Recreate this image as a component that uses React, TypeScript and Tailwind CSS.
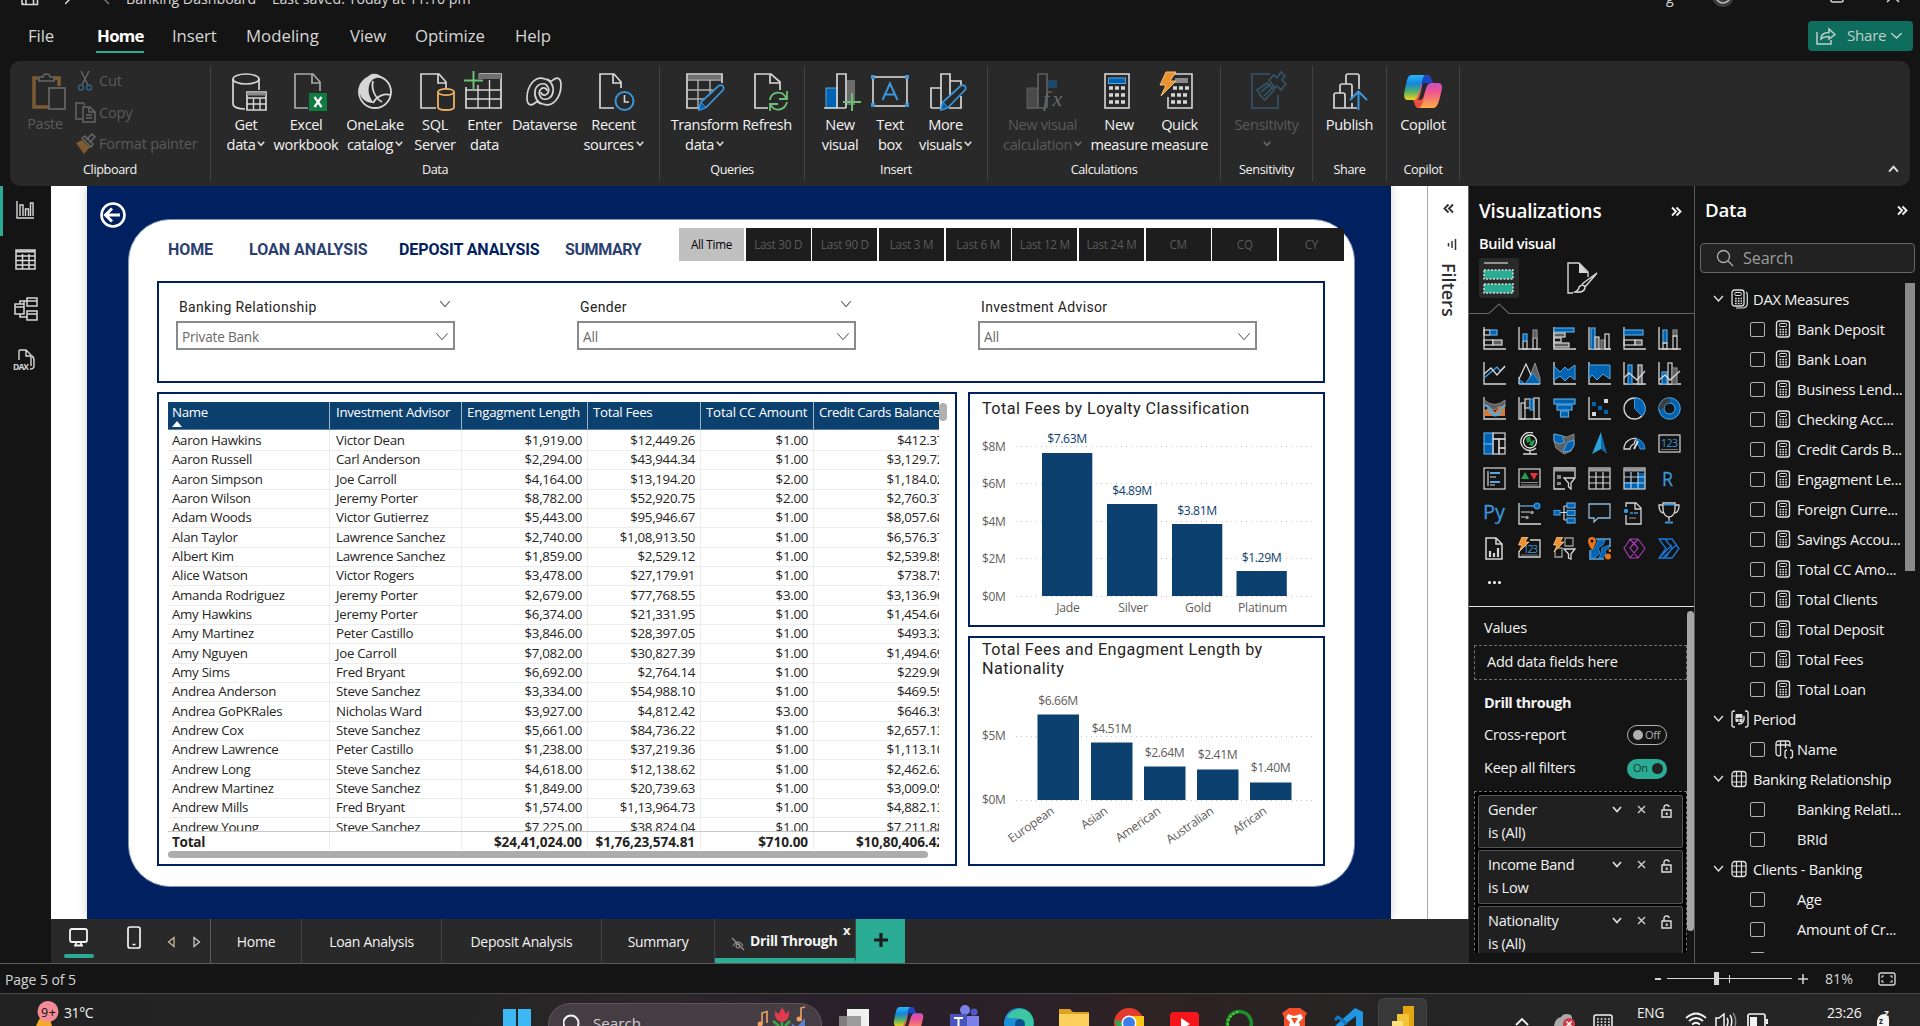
import React from "react";

type SvgProps = { children: React.ReactNode; w?: number; h?: number; vb?: string; className?: string };
const Svg = ({ children, w = 23, h = 23, vb, className }: SvgProps) => (
  <svg width={w} height={h} viewBox={vb ?? `0 0 ${w} ${h}`} fill="none" className={"shrink-0 " + (className ?? "")}>
    {children}
  </svg>
);

const W = "#d6d6d6";
const B = "#0063b1";
const L = "#3a96dd";
const D = "#5f5f5f";

/* ---------- ribbon icons: 40 x 40 boxes ---------- */
const I = ({ children, className }: { children: React.ReactNode; className?: string }) => <Svg w={40} h={40} className={className}>{children}</Svg>;

const icons: Record<string, React.ReactNode> = {
  getdata: (
    <I className="ml-[4px]">
      <ellipse cx="18" cy="8" rx="13" ry="5" stroke={W} strokeWidth="1.7" />
      <path d="M5 8V33C5 36 10 38 17 38M31 8V19" stroke={W} strokeWidth="1.7" />
      <path d="M19 21H38V39H19Z" stroke={W} strokeWidth="1.7" />
      <path d="M19 23H38" stroke="#8a8a8a" strokeWidth="3" />
      <path d="M19 27H38M19 33H38M25.500 27V39M32 27V39" stroke={W} strokeWidth="1.4" />
    </I>
  ),
  excel: (
    <I className="ml-[4px]">
      <path d="M32 20V11L25 3H7V37H20M24 3V12H32" stroke="#a8a8a8" strokeWidth="1.7" />
      <rect x="21" y="22" width="18" height="18" fill="#107c41" />
      <path d="M26.500 26L33.500 36M33.500 26L26.500 36" stroke="#fff" strokeWidth="2.200" />
    </I>
  ),
  onelake: (
    <I>
      <circle cx="20" cy="21" r="16" stroke={W} strokeWidth="1.800" />
      <path d="M12 8C14 1 24 1 28 8C22 5 17 8 15 12C12 18 14 27 19 32C8 32 3 24 4.500 16C6 12 9 9 12 8Z" fill={W} />
      <path d="M18 10C16 18 20 27 27 31M18 32C22 25 29 22 36 24" stroke={W} strokeWidth="1.800" />
    </I>
  ),
  sql: (
    <I className="ml-[6px]">
      <path d="M28 17V11L21 3H3V37H18M20 3V12H28" stroke={W} strokeWidth="1.700" />
      <ellipse cx="28" cy="21" rx="8" ry="3.200" stroke="#eeb15f" strokeWidth="1.800" />
      <path d="M20 21V36C20 40 36 40 36 36V21" stroke="#eeb15f" strokeWidth="1.800" />
    </I>
  ),
  enter: (
    <I className="-ml-[2px]">
      <path d="M2 16V37H37V3H15" stroke={W} strokeWidth="1.700" />
      <rect x="14" y="3" width="23" height="5" fill="#707070" />
      <path d="M2 19H37M2 28H37M14 14V37M25.500 9V37" stroke={W} strokeWidth="1.400" />
      <path d="M9.500 0V19M0 9.500H19" stroke="#6cc077" strokeWidth="2" />
    </I>
  ),
  dataverse: (
    <I className="-ml-[2px]">
      <g stroke={W} strokeWidth="1.700">
        <path d="M21 8C26 9 30 14 29 21C28 27 23 29 19 28C15 26 14 21 17 18C19 16 23 17 23 20" />
        <path d="M21 8C11 4 3 15 3 27C3 33 6 36 11 32C13 30 14 31 17 33" />
        <path d="M19 33C14 32 10 27 11 20C12 14 17 12 21 13C25 15 26 20 23 23C21 25 17 24 17 21" />
        <path d="M19 33C29 37 37 26 37 14C37 8 34 5 29 9C27 11 26 10 23 8" />
      </g>
    </I>
  ),
  recent: (
    <I className="ml-[5px]">
      <path d="M25 17V11L18 3H4V37H18M17 3V12H25" stroke={W} strokeWidth="1.7" />
      <circle cx="28.500" cy="30" r="9" stroke={L} strokeWidth="2" />
      <path d="M28.500 24V31H33" stroke={W} strokeWidth="1.600" />
    </I>
  ),
  transform: (
    <I>
      <path d="M37 12V3H2V37H14" stroke={W} strokeWidth="1.700" />
      <rect x="3" y="4" width="33" height="4" fill="#707070" />
      <path d="M2 9H37M2 19H28M2 28H19M13 9V37M25 9V22" stroke="#b0b0b0" strokeWidth="1.400" />
      <path d="M14 39L16 31L34 14.500C37 13 40 16 38 19L21 36.500Z" stroke={L} strokeWidth="1.700" fill="#292929" />
      <path d="M14 39L16 31L21 36.500Z" fill={B} stroke={L} />
    </I>
  ),
  refresh: (
    <I className="ml-[5px]">
      <path d="M30 19V11L21 3H5V37H18M20 3V12H30" stroke={W} strokeWidth="1.700" />
      <path d="M20 29C21 20 33 19 36 27M37 20V28H29M37 31C35 40 24 41 21 34M20 40V33H28" stroke="#6cc077" strokeWidth="1.800" />
    </I>
  ),
  newvisual: (
    <I className="ml-[3px]">
      <rect x="4" y="17" width="11" height="20" fill={B} stroke="#5aa7e0" />
      <path d="M15 37V3H24V37M2 37H24" stroke={W} strokeWidth="1.700" />
      <rect x="25" y="9" width="8" height="25" fill="#6b6b6b" />
      <path d="M30 22V40M21 31H39" stroke="#6cc077" strokeWidth="2" />
    </I>
  ),
  textbox: (
    <I>
      <rect x="3" y="6" width="34" height="29" stroke={W} strokeWidth="1.600" />
      <path d="M1 4H5V8H1ZM35 4H39V8H35ZM1 32H5V36H1ZM35 32H39V36H35Z" fill={L} />
      <path d="M12.500 29L20 12.500L27.500 29M15 23.500H25" stroke={L} strokeWidth="2" />
    </I>
  ),
  more: (
    <I className="ml-[3px]">
      <path d="M4 37V17H14V3H23V27M4 37H14M14 17V37M23 10H34V14M34 25V37H22" stroke={W} strokeWidth="1.700" />
      <path d="M14 39L16 31L34 14.500C37 13 40 16 38 19L21 36.500Z" stroke={L} strokeWidth="1.700" fill="#292929" />
      <path d="M14 39L16 31L21 36.500Z" fill={B} stroke={L} />
    </I>
  ),
  calc: (
    <I className="ml-[2px]">
      <rect x="3" y="17" width="11" height="20" fill="#4a4a4a" stroke="#5f5f5f" />
      <path d="M14 37V3H23V37M3 37H20" stroke="#5f5f5f" strokeWidth="1.700" />
      <rect x="24" y="9" width="9" height="8" fill="#1d486c" />
      <text x="19" y="35" fill="#686868" fontSize="22" fontStyle="italic" fontFamily="Liberation Serif" textLength="19">fx</text>
    </I>
  ),
  newmeasure: (
    <I className="-ml-[4px]">
      <rect x="8" y="3" width="24" height="34" stroke={W} strokeWidth="1.600" />
      <rect x="11.500" y="7" width="17" height="5.500" fill={B} stroke="#5aa7e0" />
      <path d="M12 17H28M12 24H28M12 31H28" stroke={W} strokeWidth="3.600" strokeDasharray="4 2" />
    </I>
  ),
  quick: (
    <I className="-ml-[8px]">
      <path d="M12 26V37H36V3H16" stroke={W} strokeWidth="1.600" />
      <rect x="19" y="7" width="13" height="5" fill="#8a8a8a" />
      <path d="M17 17H33M15 24H33M15 31H33" stroke={W} strokeWidth="3.600" strokeDasharray="4 2" />
      <path d="M10 1H20L14 10H20L5 25L10 14H4Z" fill="#e8912d" stroke="#f7c27d" />
    </I>
  ),
  sensitivity: (
    <I className="ml-[3px]">
      <path d="M22 3H4V37H30V24" stroke="#335467" strokeWidth="1.700" />
      <path d="M19 12L26 19L17 29L12 24L9 19ZM13 21L22 13M16 25L25 16M21 9L26 4L29 7L33 1L37 5L34 9L38 13L33 19L29 15L27 17Z" stroke="#335467" strokeWidth="1.700" />
    </I>
  ),
  publish: (
    <I className="ml-[2px]">
      <path d="M3 37V24Q3 22 5 22H12Q14 22 14 24V37M9 22V15Q9 13 11 13H19Q21 13 21 15V28M15 13V5Q15 3 17 3H26Q28 3 28 5V18M2 37H26M21 32V37" stroke={W} strokeWidth="1.700" />
      <path d="M27.500 39V21M19 29L27.500 20.500L36 29" stroke={L} strokeWidth="2" />
    </I>
  ),
  copilot: <CopilotLogo size={40} id="rb" />,
};

function CopilotLogo({ size, id }: { size: number; id: string }) {
  return (
    <svg width={size} height={size} viewBox="0 0 40 40" className="shrink-0">
      <defs>
        <linearGradient id={id + "a"} x1="0" y1="0" x2="0" y2="1">
          <stop offset="0" stopColor="#2bb5f5" />
          <stop offset=".35" stopColor="#1487dc" />
          <stop offset=".65" stopColor="#4fae6a" />
          <stop offset="1" stopColor="#f3d01c" />
        </linearGradient>
        <linearGradient id={id + "b"} x1="0" y1="0" x2="0" y2="1">
          <stop offset="0" stopColor="#a04df0" />
          <stop offset=".5" stopColor="#ee5591" />
          <stop offset="1" stopColor="#fdb045" />
        </linearGradient>
      </defs>
      <path d="M17 4H24C28 4 28 10 30 12H36C39 13 40 15 38 22C36 30 35 37 30 37H16C12 37 12 32 11 29Z" fill={`url(#${id}b)`} />
      <path d="M18 4H24C28 4 28 10 30 12C25 12 24 14 22 20L18 11Z" fill="#1747c6" />
      <path d="M9 4H22C19 6 18 16 16 22C14 27 14 29 10 29H4C0 28 1 22 2 18C4 10 4 4 9 4Z" fill={`url(#${id}a)`} />
      <path d="M10 29C14 29 14 27 16 22L22 20C21 26 20 36 16 37C12 37 12 32 10 29Z" fill="#e9503f" />
      <path d="M20 12H27C24 12 23 18 21 24C20 28 19 29 15 29C18 25 18 16 20 12Z" fill="#292929" />
    </svg>
  );
}

const Chev = ({ s = 8, c = "#cfcfcf", up, sw = 1.600, w }: { s?: number; c?: string; up?: boolean; sw?: number; w?: number }) => (
  <svg width={w ?? s} height={s * 0.7} viewBox="0 0 10 7" preserveAspectRatio="none" fill="none" className="inline-block shrink-0">
    <path d={up ? "M1 6L5 1.500L9 6" : "M1 1L5 5.500L9 1"} stroke={c} strokeWidth={sw} />
  </svg>
);

type BtnProps = { icon: string; a: string; b?: string; w: string; chev?: boolean; dim?: boolean };
const Btn = ({ icon, a, b, w, chev, dim }: BtnProps) => (
  <div className={`flex shrink-0 flex-col items-center pt-[10px] text-[14.600px] leading-5 whitespace-nowrap tracking-[-0.38px] ${w} ${dim ? "text-[#5a5a5a]" : "text-[#f3f3f3]"}`}>
    {icons[icon]}
    <span className="mt-[3px]">{a}</span>
    <span className="flex h-5 items-center gap-[2px]">
      {b}
      {chev && <Chev s={8} c={dim ? "#6a6a6a" : "#d8d8d8"} sw={2} />}
    </span>
  </div>
);

const Group = ({ label, w, pl, children }: { label: string; w: string; pl: string; children: React.ReactNode }) => (
  <div className={`my-[5px] flex shrink-0 flex-col border-r border-[#434343] ${w}`}>
    <div className={`-mt-[5px] flex h-[99px] ${pl}`}>{children}</div>
    <div className="flex h-[19px] items-center justify-center text-[12.700px] tracking-[-0.4px] text-[#f3f3f3]">{label}</div>
  </div>
);

function Header() {
  return (
    <header className="h-[61px] shrink-0">
      <div className="flex h-[12px] items-end overflow-hidden text-[#d8d8d8]">
        <Svg w={20} h={12} className="ml-[20px]"><path d="M2 -6V10H4M2 10.500H17.500V-6M6 10V4H13.500V10" stroke={W} strokeWidth="1.600" transform="translate(0,-6)" /></Svg>
        <Svg w={12} h={12} className="ml-[25px]"><path d="M0 4L8 -4" stroke={W} strokeWidth="1.500" /></Svg>
        <Svg w={12} h={12} className="ml-[24px]"><path d="M8 4L2 -2" stroke="#777" strokeWidth="1.500" /></Svg>
        <span className="mb-[3px] ml-[13px] w-[146px] text-[14.200px] leading-[20px] whitespace-nowrap">Banking Dashboard</span>
        <span className="mb-[3px] w-[199px] text-[14.200px] leading-[20px] whitespace-nowrap">Last saved: Today at 11:10 pm</span>
        <span className="mb-[4px] ml-[1195px] w-[8px] text-[14.200px] leading-[20px]">g</span>
        <Svg w={24} h={12} className="ml-[37px]"><circle cx="12" cy="-4" r="11" fill="#3c3c3c" /><circle cx="12" cy="-4" r="7" stroke="#bdbdbd" strokeWidth="1.600" /></Svg>
        <Svg w={16} h={12} className="ml-[95px]"><path d="M1 -4V1Q1 2 3 2H11Q13 2 13 1V-4" stroke={W} strokeWidth="1.500" /></Svg>
        <Svg w={16} h={12} className="ml-[40px]"><path d="M1 2L7 -4L13 2" stroke={W} strokeWidth="1.500" /></Svg>
      </div>
      <nav className="flex h-[49px] items-start text-[16.800px] leading-[47px] tracking-[-0.1px] text-[#d6d6d6]">
        <span className="ml-[28px] w-[69px]">File</span>
        <span className="relative mr-[29px] w-[46px] font-bold tracking-[-0.7px] text-white">
          Home
          <i className="absolute -left-px bottom-[6px] h-[2px] w-[48px] bg-[#2aac94]" />
        </span>
        <span className="w-[74px]">Insert</span>
        <span className="w-[104px] tracking-[0px]">Modeling</span>
        <span className="w-[65px]">View</span>
        <span className="w-[100px]">Optimize</span>
        <span>Help</span>
        <button className="mt-[9px] mr-[7px] ml-auto flex h-[30px] w-[105px] items-center rounded-[4px] bg-[#0e6d5c] pl-[8px] text-[15.200px] leading-none text-[#bcd0cb]">
          <Svg w={20} h={20} className="mr-[11px]">
            <path d="M1 6V18H15V14M5 13C5 8 9 6.500 13 6.500V3L19 8.500L13 13V10.500C9 10.500 7 11 5 13Z" stroke="#bcd0cb" strokeWidth="1.500" />
          </Svg>
          <span className="tracking-[-0.3px]">Share</span>
          <span className="ml-[4px] flex"><Chev s={11} w={13} c="#bcd0cb" sw={1.200} /></span>
        </button>
      </nav>
    </header>
  );
}

function Ribbon() {
  return (
    <div className="mx-[10px] flex h-[125px] shrink-0 rounded-[10px] bg-[#292929] relative z-10">
      <Group label="Clipboard" w="w-[201px]" pl="pl-[16px]">
        <div className="flex w-[38px] flex-col items-center pt-[10px] text-[14.400px] leading-5 tracking-[-0.2px] text-[#5a5a5a]">
          <Svg w={38} h={40} className="ml-[5px]">
            <path d="M9 7H5V36H20M25 7H30V15" stroke="#7d5b33" strokeWidth="3.500" />
            <path d="M10 10V6H14C14 2 21 2 21 6H25V10Z" stroke="#666" strokeWidth="1.700" />
            <rect x="20" y="17" width="16" height="21" stroke="#666" strokeWidth="1.700" fill="#292929" />
          </Svg>
          <span className="mt-[3px]">Paste</span>
        </div>
        <div className="ml-[11px] flex flex-col text-[14.600px] tracking-[-0.25px] text-[#5a5a5a]">
          <div className="mt-[4px] flex h-[33px] items-center"><Svg w={24} h={22}>
            <path d="M6 1L13 15M14 1L7 15" stroke="#666" strokeWidth="1.500" /><circle cx="6" cy="17.500" r="2.500" stroke="#335f80" strokeWidth="1.500" /><circle cx="14" cy="17.500" r="2.500" stroke="#335f80" strokeWidth="1.500" />
          </Svg>Cut</div>
          <div className="flex h-[33px] items-center"><Svg w={24} h={22}>
            <path d="M7 17H1V1H8L10 3M8 5H15L20 10V20H8ZM14 5V10H20M11 13H17M11 16H17" stroke="#666" strokeWidth="1.500" />
          </Svg>Copy</div>
          <div className="flex h-[33px] items-center whitespace-nowrap"><Svg w={24} h={22}>
            <path d="M11 7L17 1L20 4L14 10M7 5L16 14L18 11L10 3Z" stroke="#666" strokeWidth="1.500" /><path d="M1 10L7 7L15 14L9 21Z" fill="#7d5b33" />
          </Svg>Format painter</div>
        </div>
      </Group>
      <Group label="Data" w="w-[449px]" pl="pl-[7px]">
        <Btn icon="getdata" a="Get" b="data" chev w="w-[56px]" />
        <Btn icon="excel" a="Excel" b="workbook" w="w-[64px]" />
        <Btn icon="onelake" a="OneLake" b="catalog" chev w="w-[74px]" />
        <Btn icon="sql" a="SQL" b="Server" w="w-[46px]" />
        <Btn icon="enter" a="Enter" b="data" w="w-[53px]" />
        <Btn icon="dataverse" a="Dataverse" w="w-[67px]" />
        <Btn icon="recent" a="Recent" b="sources" chev w="w-[71px]" />
      </Group>
      <Group label="Queries" w="w-[145px]" pl="pl-[12px]">
        <Btn icon="transform" a="Transform" b="data" chev w="w-[65px]" />
        <Btn icon="refresh" a="Refresh" w="w-[60px]" />
      </Group>
      <Group label="Insert" w="w-[183px]" pl="pl-[12px]">
        <Btn icon="newvisual" a="New" b="visual" w="w-[46px]" />
        <Btn icon="textbox" a="Text" b="box" w="w-[54px]" />
        <Btn icon="more" a="More" b="visuals" chev w="w-[57px]" />
      </Group>
      <Group label="Calculations" w="w-[233px]" pl="pl-[11px]">
        <Btn icon="calc" a="New visual" b="calculation" chev dim w="w-[87px]" />
        <Btn icon="newmeasure" a="New" b="measure" w="w-[66px]" />
        <Btn icon="quick" a="Quick" b="measure" w="w-[55px]" />
      </Group>
      <Group label="Sensitivity" w="w-[92px]" pl="justify-center">
        <Btn icon="sensitivity" a="Sensitivity" chev dim w="w-[70px]" />
      </Group>
      <Group label="Share" w="w-[74px]" pl="justify-center">
        <Btn icon="publish" a="Publish" w="w-[60px]" />
      </Group>
      <Group label="Copilot" w="w-[73px]" pl="justify-center">
        <Btn icon="copilot" a="Copilot" w="w-[60px]" />
      </Group>
      <div className="mr-[11px] mb-[13px] ml-auto flex items-end"><Chev s={11} up sw={1.800} c="#e0e0e0" /></div>
    </div>
  );
}

function SideNav() {
  return (
    <aside className="flex w-[51px] shrink-0 flex-col bg-[#141414]">
      <div className="flex h-[50px] items-center border-l-[3px] border-[#2aac94] pb-[2px] pl-[12px]">
        <Svg w={20} h={20}><path d="M2 1V18H19M5 16V5H8V16M10.500 16V9H13.500V16M15.500 16V3H18V16" stroke={W} strokeWidth="1.400" /></Svg>
      </div>
      <div className="flex h-[46px] items-center pl-[15px]">
        <Svg w={21} h={21}><path d="M1 1H20V20H1ZM1 7H20M1 11.500H20M1 16H20M7.500 5V20M14 5V20" stroke={W} strokeWidth="1.500" /><path d="M1 2.500H20" stroke={W} strokeWidth="2" /></Svg>
      </div>
      <div className="flex h-[54px] items-center pl-[14px]">
        <Svg w={24} h={24}><path d="M1 7H10V17H1ZM1 10H10M13 1H23V9H13ZM13 4H23M13 14H23V23H13ZM13 17H23M10 10H10V4H13M6 7V4H13M6 17V20H13" stroke={W} strokeWidth="1.500" /></Svg>
      </div>
      <div className="flex h-[47px] items-center pl-[13px]">
        <Svg w={24} h={24}><path d="M6 12V3Q6 2 7 2H13L18 7V18M13 2V8H18M19 8Q21 9 21 13V18Q21 21 17 21" stroke={W} strokeWidth="1.400" /><text x="0" y="21.500" fontSize="8.500" fontWeight="700" fill={W} fontFamily="Open Sans" textLength="16">DAX</text></Svg>
      </div>
    </aside>
  );
}

const rows: string[][] = `Aaron Hawkins|Victor Dean|$1,919.00|$12,449.26|$1.00|$412.37
Aaron Russell|Carl Anderson|$2,294.00|$43,944.34|$1.00|$3,129.72
Aaron Simpson|Joe Carroll|$4,164.00|$13,194.20|$2.00|$1,184.02
Aaron Wilson|Jeremy Porter|$8,782.00|$52,920.75|$2.00|$2,760.37
Adam Woods|Victor Gutierrez|$5,443.00|$95,946.67|$1.00|$8,057.68
Alan Taylor|Lawrence Sanchez|$2,740.00|$1,08,913.50|$1.00|$6,576.37
Albert Kim|Lawrence Sanchez|$1,859.00|$2,529.12|$1.00|$2,539.89
Alice Watson|Victor Rogers|$3,478.00|$27,179.91|$1.00|$738.75
Amanda Rodriguez|Jeremy Porter|$2,679.00|$77,768.55|$3.00|$3,136.96
Amy Hawkins|Jeremy Porter|$6,374.00|$21,331.95|$1.00|$1,454.66
Amy Martinez|Peter Castillo|$3,846.00|$28,397.05|$1.00|$493.32
Amy Nguyen|Joe Carroll|$7,082.00|$30,827.39|$1.00|$1,494.69
Amy Sims|Fred Bryant|$6,692.00|$2,764.14|$1.00|$229.90
Andrea Anderson|Steve Sanchez|$3,334.00|$54,988.10|$1.00|$469.59
Andrea GoPKRales|Nicholas Ward|$3,927.00|$4,812.42|$3.00|$646.35
Andrew Cox|Steve Sanchez|$5,661.00|$84,736.22|$1.00|$2,657.13
Andrew Lawrence|Peter Castillo|$1,238.00|$37,219.36|$1.00|$1,113.10
Andrew Long|Steve Sanchez|$4,618.00|$12,138.62|$1.00|$2,462.62
Andrew Martinez|Steve Sanchez|$1,849.00|$20,739.63|$1.00|$3,009.05
Andrew Mills|Fred Bryant|$1,574.00|$1,13,964.73|$1.00|$4,882.13
Andrew Young|Steve Sanchez|$7,225.00|$38,824.04|$1.00|$7,211.88`
  .split("\n")
  .map((r) => r.split("|"));

const cols = "grid grid-cols-[162px_132px_126px_113px_113px_136px]";

function ClientTable() {
  return (
    <div className="h-[474px] w-[800px] border-[2px] border-[#00205f] pt-[8px] pl-[9px]">
      <div className="flex">
        <div className="h-[448px] w-[771px] overflow-hidden text-[13.300px] tracking-[-0.3px] text-[#252423]">
          <div className={`${cols} h-[28px] w-[782px] border-b border-[#5b7f9f] bg-[#0c416f] leading-[20px] whitespace-nowrap text-white`}>
            <div className="relative border-r border-[#9fb3c6] pl-[4px]">
              Name
              <i className="absolute bottom-[2px] left-[4px] h-0 w-0 border-x-[5px] border-b-[6px] border-x-transparent border-b-white" />
            </div>
            <div className="border-r border-[#9fb3c6] pl-[6px]">Investment Advisor</div>
            <div className="border-r border-[#9fb3c6] pl-[5px] tracking-[-0.2px]">Engagment Length</div>
            <div className="border-r border-[#9fb3c6] pl-[5px]">Total Fees</div>
            <div className="border-r border-[#9fb3c6] pl-[5px] tracking-[-0.2px]">Total CC Amount</div>
            <div className="pl-[5px] tracking-[-0.4px]">Credit Cards Balance</div>
          </div>
          <div className="h-[401px] overflow-hidden">
            {rows.map((r) => (
              <div key={r[0]} className={`${cols} h-[19.330px] w-[782px] leading-[20px] whitespace-nowrap`}>
                {r.map((c, i) => (
                  <div key={i} className={`border-r border-b border-[#ededed] ${i === 0 ? "pl-[4px]" : i === 1 ? "pl-[6px]" : "pr-[5px] text-right"}`}>{c}</div>
                ))}
              </div>
            ))}
          </div>
          <div className={`${cols} h-[19px] w-[782px] border-t border-[#c8c8c8] text-[13.600px] leading-[19px] font-bold tracking-[-0.1px] whitespace-nowrap`}>
            <div className="border-r border-[#ededed] pl-[4px] tracking-[-0.3px]">Total</div>
            <div className="border-r border-[#ededed]" />
            <div className="border-r border-[#ededed] pr-[5px] text-right">$24,41,024.00</div>
            <div className="border-r border-[#ededed] pr-[5px] text-right">$1,76,23,574.81</div>
            <div className="border-r border-[#ededed] pr-[5px] text-right">$710.00</div>
            <div className="pr-[6px] text-right">$10,80,406.42</div>
          </div>
        </div>
        <div className="mt-[1px] h-[18px] w-[8px] rounded-full bg-[#b0b0b0]" />
      </div>
      <div className="mt-[1px] h-[7px] w-[760px] rounded-full bg-[#adadad]" />
    </div>
  );
}

const SANS = "Open Sans, sans-serif";

function ChartA() {
  const ys: [string, number][] = [["$8M", 54.500], ["$6M", 91.500], ["$4M", 129.500], ["$2M", 166.500], ["$0M", 204.500]];
  const bars: [string, string, number, number, number][] = [
    ["Jade", "$7.63M", 74, 61, 46], ["Silver", "$4.89M", 139, 112, 98], ["Gold", "$3.81M", 204, 132, 118], ["Platinum", "$1.29M", 268.500, 179, 165],
  ];
  return (
    <div className="h-[235px] w-[357px] border-[2px] border-[#00205f]">
      <h3 className="absolute mt-[5px] ml-[12px] font-[Roboto] text-[16.200px] leading-[20px] tracking-[0.42px] whitespace-nowrap text-[#252423]">Total Fees by Loyalty Classification</h3>
      <svg width="353" height="231" viewBox="2 2 353 231" fontFamily={SANS}>
        {ys.map(([t, y]) => (
          <g key={t}>
            <text x="14" y={y + 4} fontSize="12" letterSpacing="-0.4" fill="#605e5c">{t}</text>
            <path d={`M48 ${y}H345`} stroke="#c8c6c4" strokeDasharray="1 4" />
          </g>
        ))}
        {bars.map(([n, v, x, top, ly]) => (
          <g key={n}>
            <rect x={x} y={top} width="50.300" height={204 - top} fill="#0c416f" />
            <text x={x + 25} y={ly + 4.500} fontSize="12.200" letterSpacing="-0.4" fill="#0c416f" textAnchor="middle">{v}</text>
            <text x={x + 26} y="220" fontSize="12.200" letterSpacing="-0.2" fill="#605e5c" textAnchor="middle">{n}</text>
          </g>
        ))}
      </svg>
    </div>
  );
}

function ChartB() {
  const bars: [string, string, number, number, number][] = [
    ["European", "$6.66M", 69.500, 78.500, 64], ["Asian", "$4.51M", 123, 106.500, 92], ["American", "$2.64M", 176, 130.500, 116], ["Australian", "$2.41M", 229, 133.500, 118], ["African", "$1.40M", 282, 146.500, 131],
  ];
  return (
    <div className="mt-[9px] h-[230px] w-[357px] border-[2px] border-[#00205f]">
      <h3 className="absolute mt-[2px] ml-[12px] w-[310px] font-[Roboto] text-[16.200px] leading-[19px] tracking-[0.44px] text-[#252423]">Total Fees and Engagment Length by Nationality</h3>
      <svg width="353" height="226" viewBox="2 2 353 226" fontFamily={SANS}>
        {([["$5M", 100.500], ["$0M", 164.500]] as [string, number][]).map(([t, y]) => (
          <g key={t}>
            <text x="14" y={y + 3.500} fontSize="12" letterSpacing="-0.4" fill="#605e5c">{t}</text>
            <path d={`M48 ${y}H345`} stroke="#c8c6c4" strokeDasharray="1 4" />
          </g>
        ))}
        {bars.map(([n, v, x, top, ly]) => (
          <g key={n}>
            <rect x={x} y={top} width="41.500" height={164 - top} fill="#0c416f" />
            <text x={x + 20.500} y={ly + 4.500} fontSize="12.200" letterSpacing="-0.4" fill="#605e5c" textAnchor="middle">{v}</text>
            <text transform={`translate(${x + 17.500} 177) rotate(-35)`} fontSize="12.200" letterSpacing="-0.3" fill="#605e5c" textAnchor="end">{n}</text>
          </g>
        ))}
      </svg>
    </div>
  );
}

const Slicer = ({ label, value, ml, head }: { label: string; value: string; ml: string; head?: boolean }) => (
  <div className={`w-[279px] shrink-0 ${ml}`}>
    <div className="flex h-[30px] items-center pt-[2px] pr-[4px] pl-[3px] font-[Roboto] text-[14px] tracking-[0.35px] text-[#252423]">
      {label}
      {head && <span className="mb-[5px] ml-auto flex"><Chev s={12} sw={0.900} c="#666" /></span>}
    </div>
    <div className="flex h-[29px] items-center justify-between border-2 border-[#8a8a8a] pt-[3px] pr-[4px] pl-[4px] text-[13.600px] tracking-[-0.2px] text-[#6b6967]">
      <span>{value}</span>
      <Chev s={14} sw={0.700} c="#444" />
    </div>
  </div>
);

function Report() {
  const times = ["All Time", "Last 30 D", "Last 90 D", "Last 3 M", "Last 6 M", "Last 12 M", "Last 24 M", "CM", "CQ", "CY"];
  return (
    <div className="flex h-[733px] w-[1304px] shrink-0 bg-[#00205f] shadow-[0_0_10px_rgba(0,0,0,0.18)]">
      <div className="w-[41px] shrink-0 pt-[16px] pl-[13px]">
        <Svg w={26} h={26}><circle cx="13" cy="13" r="11.500" stroke="#fff" strokeWidth="2.600" /><path d="M5.500 13H20M12 6.500L5.500 13L12 19.500" stroke="#fff" strokeWidth="3" /></Svg>
      </div>
      <div className="mt-[33px] h-[668px] w-[1227px] rounded-[42px] border border-[#7d94b5] bg-white pt-[8px] pl-[28px]">
        <div className="flex h-[53px]">
          <div className="flex w-[522px] shrink-0 pt-[11px] font-[Roboto] text-[16px] leading-[22px] font-bold whitespace-nowrap text-[#2b4070]">
            <span className="ml-[11px] w-[81px] tracking-[-0.1px]">HOME</span>
            <span className="w-[150px]">LOAN ANALYSIS</span>
            <span className="w-[166px] tracking-[-0.1px] text-[#00205f]">DEPOSIT ANALYSIS</span>
            <span className="tracking-[-0.4px]">SUMMARY</span>
          </div>
          <div className="flex h-[33px] w-[665px] shrink-0 gap-[1.600px]">
            {times.map((t, i) => (
              <div key={t} className={`flex flex-1 items-center justify-center pt-px text-[11.700px] tracking-[-0.25px] whitespace-nowrap ${i === 0 ? "bg-[#c0c0c0] text-black" : "bg-[#1d1d1d] text-[#5a5a5a]"}`}>{t}</div>
            ))}
          </div>
        </div>
        <div className="flex h-[102px] w-[1168px] border-2 border-[#00205f] pt-[8px]">
          <Slicer label="Banking Relationship" value="Private Bank" ml="ml-[17px]" head />
          <Slicer label="Gender" value="All" ml="ml-[122px]" head />
          <Slicer label="Investment Advisor" value="All" ml="ml-[122px]" />
        </div>
        <div className="mt-[9px] flex gap-[11px]">
          <ClientTable />
          <div><ChartA /><ChartB /></div>
        </div>
      </div>
    </div>
  );
}

function PageTabs() {
  return (
    <div className="flex h-[44px] shrink-0 items-stretch bg-[#292929] text-[14px] tracking-[-0.28px] text-[#f3f3f3]">
      <div className="flex w-[56px] flex-col items-center">
        <Svg w={20} h={20} className="mt-[8px]"><path d="M3 2H16Q18 2 18 4V13Q18 15 16 15H3Q1 15 1 13V4Q1 2 3 2ZM5 18.500H14M7 15V18M12 15V18" stroke="#f3f3f3" strokeWidth="1.800" /></Svg>
        <i className="mt-[7px] h-[4px] w-[30px] rounded-sm bg-[#2aac94]" />
      </div>
      <div className="flex w-[56px] justify-center"><Svg w={14} h={23} className="mt-[7px] -ml-[2px]"><rect x="1" y="1" width="12" height="21" rx="2" stroke="#f3f3f3" strokeWidth="1.700" /><path d="M5.500 18.500H8.500" stroke="#f3f3f3" strokeWidth="1.500" /></Svg></div>
      <div className="flex w-[48px] items-center gap-[18px] border-r border-[#5c5c5c] pt-px pl-[4px]">
        <Svg w={8} h={12}><path d="M7 1.500L1.500 6L7 10.500Z" stroke="#d0c09a" strokeWidth="1.200" /></Svg>
        <Svg w={8} h={12}><path d="M1 1.500L6.500 6L1 10.500Z" stroke="#d0d0d0" strokeWidth="1.200" /></Svg>
      </div>
      <div className="flex w-[91px] items-center justify-center border-r border-[#444]">Home</div>
      <div className="flex w-[140px] items-center justify-center border-r border-[#444]">Loan Analysis</div>
      <div className="flex w-[160px] items-center justify-center border-r border-[#444]">Deposit Analysis</div>
      <div className="flex w-[113px] items-center justify-center border-r border-[#444]">Summary</div>
      <div className="flex w-[141px] shrink-0 items-center border-r border-b-[5px] border-r-[#444] border-b-[#2aac94] pt-[4px] pl-[16px] font-bold tracking-[-0.350px]">
        <Svg w={14} h={14} className="mt-[7px] mr-[5px]"><path d="M1 1L13 13M2 9Q7 1 12 9M7 7A2 2 0 1 1 6.900 7" stroke="#9a9a9a" strokeWidth="1.100" /></Svg>
        <span className="w-[91px] whitespace-nowrap">Drill Through</span>
        <span className="-mt-[20px] ml-[2px] text-[13px]">x</span>
      </div>
      <div className="flex w-[49px] items-center justify-center bg-[#2aac94] pb-[3px]"><Svg w={14} h={14}><path d="M7 0V14M0 7H14" stroke="#1d1d1d" strokeWidth="3.200" /></Svg></div>
    </div>
  );
}

const Dbl = ({ left, c = "#f3f3f3" }: { left?: boolean; c?: string }) => (
  <Svg w={11} h={11} className={left ? "rotate-180" : ""}><path d="M1 1.500L5 5.500L1 9.500M5.500 1.500L9.500 5.500L5.500 9.500" stroke={c} strokeWidth="1.900" /></Svg>
);

function FiltersRail() {
  return (
    <div className="flex w-[42px] shrink-0 flex-col items-center border-r border-l border-r-[#666] border-l-[#a8a8a8] bg-white pt-[17px]">
      <Dbl left c="#333" />
      <Svg w={14} h={13} className="mt-[24px] ml-[6px]"><path d="M11.500 1V12M8 3V10M4.500 5V8.500" stroke="#333" strokeWidth="1.500" /></Svg>
      <span className="mt-[12px] ml-[1px] text-[18px] leading-[20px] font-semibold text-[#2d2d2d] [writing-mode:vertical-rl]">Filters</span>
    </div>
  );
}

/* ---------- visual gallery icons ---------- */
const axis = <path d="M1 0V22H23" stroke={W} strokeWidth="1.300" />;
const V = ({ children }: { children: React.ReactNode }) => <Svg>{children}</Svg>;
const R = ({ x, y, w, h, f = "none", s = W }: { x: number; y: number; w: number; h: number; f?: string; s?: string }) => (
  <rect x={x} y={y} width={w} height={h} fill={f} stroke={s} strokeWidth="1.200" />
);
const Bolt = () => <path d="M4 0H10L7 5H11L1 15L4 8H0.500Z" fill="#f0902c" stroke="#ffd9a8" strokeWidth=".7" />;

const gallery: React.ReactNode[] = [
  <V>{axis}<R x={1} y={3} w={6} h={5} /><R x={7} y={3} w={7} h={5} f={B} s="#5aa7e0" /><R x={1} y={13} w={9} h={5} /><R x={10} y={13} w={9} h={5} f={D} /></V>,
  <V>{axis}<R x={5} y={14} w={4} h={8} /><R x={5} y={7} w={4} h={7} f={B} s="#5aa7e0" /><R x={15} y={11} w={4} h={11} /><R x={15} y={3} w={4} h={8} f={D} s="#8a8a8a" /></V>,
  <V>{axis}<R x={1} y={1} w={20} h={4} f={B} s="#5aa7e0" /><R x={1} y={6} w={11} h={4} f={D} /><R x={1} y={11} w={7} h={4} /><R x={1} y={16} w={15} h={4} f={D} /></V>,
  <V>{axis}<R x={3} y={1} w={4} h={21} f={B} s="#5aa7e0" /><R x={7} y={10} w={4} h={12} f={D} /><R x={13} y={13} w={4} h={9} f={D} s="#8a8a8a" /><R x={17} y={7} w={4} h={15} /></V>,
  <V>{axis}<R x={1} y={3} w={19} h={5} f={B} s="#5aa7e0" /><R x={1} y={13} w={11} h={5} /><R x={12} y={13} w={7} h={5} f={D} /></V>,
  <V>{axis}<R x={5} y={3} w={4} h={13} f={B} s="#5aa7e0" /><R x={5} y={16} w={4} h={6} /><R x={15} y={3} w={4} h={6} f={D} s="#8a8a8a" /><R x={15} y={9} w={4} h={13} /></V>,

  <V>{axis}<path d="M1 16L14 5L17 9L22 5" stroke={L} strokeWidth="1.500" /><path d="M1 12L8 6L14 13L22 4" stroke={W} strokeWidth="1.300" /></V>,
  <V><path d="M9 22L17 1L22 16V22Z" fill={D} stroke="#8a8a8a" /><path d="M1 17L8 2L17 22" stroke={W} strokeWidth="1.300" /><path d="M1 17L7 22L15 11L22 21V22H1Z" fill={B} stroke={L} /><path d="M1 15V22H22" stroke={W} /></V>,
  <V>{axis}<path d="M1 4L7 10L12 5L15 8L22 3V18L17 14L12 19L7 14L1 18Z" fill={B} stroke="#5aa7e0" /></V>,
  <V>{axis}<path d="M1 3H22V17L15 12L9 18L4 13L1 17Z" fill={B} stroke="#5aa7e0" /></V>,
  <V>{axis}<R x={5} y={3} w={4} h={19} f={B} s="#5aa7e0" /><R x={15} y={3} w={4} h={19} f={D} /><path d="M1 16L6 11L14 18L22 9" stroke={W} strokeWidth="1.300" /></V>,
  <V>{axis}<R x={4} y={10} w={5} h={12} f={B} s="#5aa7e0" /><R x={10} y={1} w={4} h={21} f="#141414" /><R x={14} y={6} w={5} h={16} f={D} s="#8a8a8a" /><path d="M1 18L7 13L12 18L22 9" stroke={W} strokeWidth="1.300" /></V>,

  <V>{axis}<path d="M2 13L7 10L12 15L16 9L22 10V19H2Z" fill="#e8731a" /><path d="M1 3Q12 12 22 3V10Q15 8 12 13Q7 13 1 8Z" fill={D} stroke="#8a8a8a" /><path d="M1 8Q6 8 9 15Q12 20 16 14L22 8M4 12Q12 24 20 14" stroke="#5aa7e0" strokeWidth="1.800" /></V>,
  <V>{axis}<R x={3} y={6} w={4} h={16} /><R x={7} y={2} w={5} h={9} f="#2b2b2b" /><R x={12} y={2} w={3} h={11} f={B} s={L} /><R x={16} y={1} w={5} h={21} /></V>,
  <V><R x={1} y={2} w={21} h={5} f={B} s="#5aa7e0" /><R x={4} y={8} w={15} h={5} f={B} s="#5aa7e0" /><R x={7.500} y={14} w={8} h={6} f={B} s="#5aa7e0" /></V>,
  <V>{axis}<rect x="4" y="5" width="4" height="4" fill={B} /><rect x="16" y="2" width="4" height="4" fill={W} /><rect x="10" y="9" width="4" height="4" fill={B} /><rect x="4" y="15" width="4" height="4" fill={W} /><rect x="16" y="13" width="4" height="4" fill={B} /></V>,
  <V><circle cx="11.500" cy="11.500" r="10.500" stroke={W} strokeWidth="1.300" /><path d="M11.500 1A10.500 10.500 0 0 1 19 19L11.500 11.500Z" fill={B} stroke={L} /></V>,
  <V><circle cx="11.500" cy="11.500" r="8" stroke={B} strokeWidth="5.500" /><circle cx="11.500" cy="11.500" r="10.800" stroke="#5aa7e0" /><circle cx="11.500" cy="11.500" r="5.500" stroke="#5aa7e0" /><path d="M3.500 12A8 8 0 0 1 11.500 3.500" stroke="#3d3d3d" strokeWidth="4.500" /></V>,

  <V><R x={1} y={1} w={9} h={11} f={B} s="#5aa7e0" /><R x={1} y={12} w={9} h={10} f={B} s="#5aa7e0" /><R x={10} y={1} w={12} h={6} /><R x={10} y={7} w={6} h={15} /><R x={16} y={7} w={6} h={9} /><R x={16} y={16} w={6} h={6} /></V>,
  <V><circle cx="12" cy="9.500" r="6.500" stroke="#eee" strokeWidth="1.300" /><path d="M8 6L12 4L13 9L9 11ZM13 9L17 8L15 14L11 13Z" fill="#22a04b" /><path d="M15 1A9 9 0 1 0 18 16M12 19V22M5 22H19" stroke={W} strokeWidth="1.400" /></V>,
  <V><path d="M1 2L8 4L14 5L21 2V13L18 19L11 22L3 16L1 9Z" fill={D} stroke="#8a8a8a" /><path d="M1 2L10 4V8L12 10L6 12L1 9ZM13 13L15 10L21 8V14L17 19L10 20Z" fill={B} stroke="#5aa7e0" /></V>,
  <V><path d="M13 0L4 22L13 17Z" fill="#2aa3dd" /><path d="M13 0L19 22L13 17Z" fill="#156aa8" /></V>,
  <V><path d="M1 17A10.500 10.500 0 0 1 13 6.500L11 12A6 6 0 0 0 7 17Z" stroke={W} strokeWidth="1.300" /><path d="M13 6.500A10.500 10.500 0 0 1 22 17H17A6 6 0 0 0 14 12Z" fill={B} stroke={L} /><path d="M11 17L15 9" stroke={W} strokeWidth="2" /></V>,
  <V><R x={1} y={3} w={21} h={17} /><path d="M3 17.500H20" stroke="#777" /><text x="3" y="15" fontSize="10.500" fill={L} fontFamily="Open Sans" textLength="17">123</text></V>,

  <V><R x={1} y={1} w={21} h={21} /><path d="M7 6H17M7 15H17" stroke="#5aa7e0" strokeWidth="2" /><path d="M5 4V19M7 10H13M7 18H12" stroke={W} strokeWidth="1.200" /></V>,
  <V><R x={1} y={2} w={21} h={18} /><path d="M3 12L7 5L11 12Z" fill="#22a04b" /><path d="M12 6H20L16 13Z" fill="#e0333c" /><path d="M3 15.500H20M3 18H20" stroke="#8a8a8a" /></V>,
  <V><path d="M22 10V1H1V22H12" stroke={W} strokeWidth="1.300" /><path d="M1 3H22" stroke="#9a9a9a" strokeWidth="3" /><path d="M6 8V18" stroke="#888" strokeWidth="4" strokeDasharray="4 3" /><path d="M11 11H22L18 16V22L15.500 20V16Z" stroke={W} strokeWidth="1.300" fill="#141414" /></V>,
  <V><R x={1} y={1} w={21} h={21} /><path d="M1 3H22" stroke="#9a9a9a" strokeWidth="3" /><path d="M1 10H22M1 16H22M8 5V22M15 5V22" stroke={W} strokeWidth="1.200" /></V>,
  <V><rect x="1" y="15" width="21" height="7" fill={B} /><rect x="15" y="6" width="7" height="16" fill={B} /><R x={1} y={1} w={21} h={21} /><path d="M1 3H22" stroke="#9a9a9a" strokeWidth="3" /><path d="M1 10H22M1 16H22M8 5V22M15 5V22" stroke="#a9cdea" strokeWidth="1.200" /></V>,
  <V><text x="4" y="19" fontSize="20" fill={L} stroke={L} strokeWidth=".3" fontFamily="Open Sans" textLength="11" lengthAdjust="spacingAndGlyphs">R</text></V>,

  <V><text x="0" y="17" fontSize="20" fill={L} stroke={L} strokeWidth=".3" fontFamily="Open Sans" textLength="22" lengthAdjust="spacingAndGlyphs">Py</text></V>,
  <V><path d="M1 1V22H23" stroke={W} strokeWidth="1.300" /><path d="M1 4H16" stroke="#5aa7e0" strokeWidth="1.300" /><circle cx="19" cy="4" r="2.800" stroke={L} strokeWidth="1.300" fill={B} /><path d="M3 10H12M3 15H7" stroke={W} /><circle cx="14" cy="10.500" r="1.800" fill="#999" /><circle cx="9" cy="15.500" r="1.800" fill="#999" /></V>,
  <V><path d="M7 10.500H14M11 4V18M11 4H15M11 18H15" stroke={W} strokeWidth="1.200" /><R x={1} y={8.500} w={6} h={4.500} f={B} s={L} /><R x={14} y={1} w={8} h={5} f={B} s="#5aa7e0" /><R x={14} y={8.500} w={8} h={5} f={B} s="#5aa7e0" /><R x={14} y={16} w={8} h={5} f={B} s="#5aa7e0" /></V>,
  <V><path d="M1 2H22V16H10L6 20V16H1Z" stroke="#8fb6d8" strokeWidth="1.300" /></V>,
  <V><path d="M3 5V1H13L18 6V22H3V13M12 1V7H18" stroke={W} strokeWidth="1.300" /><circle cx="3" cy="9" r="2.200" fill={L} /><path d="M7 11H10M11 11H15" stroke={L} strokeWidth="1.500" /><path d="M6 16H13" stroke="#999" /></V>,
  <V><path d="M5 1H17V7C17 12 14 15 11 15C8 15 5 12 5 7ZM5 3H1C1 8 3 11 6 11M17 3H21C21 8 19 11 16 11M11 15V19" stroke={W} strokeWidth="1.300" /><path d="M6 2.500H16M7 20.500H15" stroke={L} strokeWidth="2.200" /></V>,

  <V><path d="M3 1H13L19 7V22H3ZM13 1V7H19" stroke={W} strokeWidth="1.500" /><path d="M7 20V14M11 20V16M15 20V11" stroke={W} strokeWidth="2.200" /></V>,
  <V><path d="M12 3H22V20H1V14" stroke={W} strokeWidth="1.300" /><text x="5" y="16" fontSize="10.500" fill={L} fontFamily="Open Sans" textLength="15">123</text><path d="M3 18H20" stroke="#777" /><Bolt /></V>,
  <V><path d="M12 1H20V9H12ZM2 14V20H9V11H5" stroke="#9a9a9a" strokeWidth="1.300" /><path d="M11 12H22L18 17V22L15.500 21V17Z" stroke={W} strokeWidth="1.300" fill="#141414" /><Bolt /></V>,
  <V><path d="M8 2H22V10M16 22H2V13" stroke="#5aa7e0" strokeWidth="1.500" /><path d="M10 3H17L15 8L10 11L12 16L7 21H3V14L8 9ZM21 8V11L17 14L18 18L14 21H11L13 16L14 11L19 9Z" fill={B} stroke={L} strokeWidth=".8" /><path d="M4 0A4 4 0 0 1 8 4C8 8 4 13 4 13S0 8 0 4A4 4 0 0 1 4 0Z" fill="#e8731a" /><circle cx="4" cy="4" r="1.500" fill="#141414" /><circle cx="20" cy="19.500" r="3" fill="#e8731a" /><circle cx="22" cy="13.500" r="1.500" fill="#e8731a" /></V>,
  <V><path d="M7 2H15L22 11.500L15 21H7L1 11.500ZM7 2L15 11M15 2L7 11M7 21L15 11M15 21L7 11M11 6L15 11L11 16L7 11Z" stroke="#a43bb0" strokeWidth="1.200" /></V>,
  <V><path d="M1 2H14L21 11.500L14 21H1L8 11.500ZM7 2L14 11L8 20M1 21L14 8M5 21L18 8" stroke="#1a78d8" strokeWidth="1.300" /></V>,
];

const Lock = () => (
  <Svg w={11} h={14}><path d="M1 6H10V13H1ZM3 6V3.500Q3 1 5.500 1T8 3" stroke="#e0e0e0" strokeWidth="1.400" /><rect x="4.800" y="8.500" width="1.800" height="2.500" fill="#e0e0e0" /></Svg>
);

const DrillCard = ({ a, b, h }: { a: string; b: string; h: string }) => (
  <div className={`mb-[2px] shrink-0 rounded-[2px] border border-[#555] bg-[#202020] pt-[1px] pl-[9px] ${h}`}>
    <div className="flex h-[25px] items-center">
      <span className="w-[124px]">{a}</span>
      <Chev s={10} sw={1.700} c="#e0e0e0" />
      <Svg w={9} h={9} className="ml-[15px]"><path d="M1 1L8 8M8 1L1 8" stroke="#d0d0d0" strokeWidth="1.400" /></Svg>
      <span className="ml-[15px] pt-[3px]"><Lock /></span>
    </div>
    <div className="flex h-[22px] items-center">{b}</div>
  </div>
);

function Visualizations() {
  return (
    <section className="flex w-[226px] shrink-0 flex-col border-r border-[#5c5c5c] bg-[#141414] text-[#f3f3f3]">
      <div className="flex h-[48px] items-center pt-[2px] pr-[12px] pl-[10px]">
        <h2 className="text-[18.900px] font-semibold tracking-[-0.2px] text-white">Visualizations</h2>
        <span className="ml-auto"><Dbl /></span>
      </div>
      <div className="flex h-[22px] items-center pb-[3px] pl-[10px] text-[14.600px] font-semibold tracking-[-0.350px] text-white">Build visual</div>
      <div className="flex h-[42px] pt-[2px] pl-[10px]">
        <div className="flex h-[40px] w-[40px] items-center justify-center rounded-[2px] bg-[#292929]">
          <Svg w={32} h={34}><path d="M1 2H25" stroke="#ccc" strokeWidth="1.300" /><path d="M1 9H30V18H1ZM1 23H30V32H1Z" fill="#2aac94" stroke={W} strokeWidth="1.500" strokeDasharray="2 1.500" /></Svg>
        </div>
        <Svg w={32} h={34} className="mt-[3px] ml-[48px]"><path d="M6 32H1V2H12L21 11V16" stroke={W} strokeWidth="1.400" /><path d="M12 2V12H21Z" fill={W} /><path d="M30 12L18 26M30 12L15 23M8 31Q12 29 12 26Q16 22 18 26Q18 32 8 31Z" stroke={W} strokeWidth="1.500" /></Svg>
      </div>
      <Svg w={225} h={18} className="-mb-[2px]"><path d="M0 15.500H20L30 6L40 15.500H225" stroke="#666" strokeWidth="1.200" /></Svg>
      <div className="mt-[13px] ml-[14px] grid grid-cols-[repeat(6,35px)] auto-rows-[35px]">
        {gallery.map((g, i) => <div key={i}>{g}</div>)}
      </div>
      <div className="ml-[19px] flex gap-[2px] pt-[9px]">
        <i className="h-[3px] w-[3px] rounded-full bg-white" /><i className="h-[3px] w-[3px] rounded-full bg-white" /><i className="h-[3px] w-[3px] rounded-full bg-white" />
      </div>
      <div className="mt-auto flex h-[357px] shrink-0 border-t border-[#e0e0e0]">
        <div className="flex h-[346px] w-[218px] shrink-0 flex-col overflow-hidden pl-[5px] text-[14.500px] whitespace-nowrap tracking-[-0.25px]">
          <div className="mt-[9px] flex h-[24px] shrink-0 items-center pl-[10px]">Values</div>
          <div className="mt-[5px] flex h-[35px] shrink-0 items-center border border-dashed border-[#707070] pb-[2px] pl-[12px]">Add data fields here</div>
          <div className="mt-[11px] flex h-[24px] shrink-0 items-center pl-[10px] font-bold tracking-[-0.45px]">Drill through</div>
          <div className="mt-[8px] flex h-[24px] shrink-0 items-center pl-[10px]">
            Cross-report
            <span className="mr-[20px] ml-auto flex h-[20px] w-[40px] items-center gap-[2px] rounded-full border border-[#b0b0b0] pl-[5px] text-[11px] text-[#b0b0b0]"><i className="h-[10px] w-[10px] rounded-full bg-[#b0b0b0]" />Off</span>
          </div>
          <div className="mt-[9px] flex h-[24px] shrink-0 items-center pl-[10px]">
            Keep all filters
            <span className="mt-[1px] mr-[20px] ml-auto flex h-[20px] w-[40px] items-center gap-[4px] rounded-full bg-[#2aac94] pl-[6px] text-[11px] text-[#1d3833]">On<i className="h-[11px] w-[11px] rounded-full bg-[#222]" /></span>
          </div>
          <div className="mt-[11px] flex h-[200px] shrink-0 flex-col border border-dashed border-[#707070] bg-black p-[3px]">
            <DrillCard a="Gender" b="is (All)" h="h-[53px]" />
            <DrillCard a="Income Band" b="is Low" h="h-[54px]" />
            <DrillCard a="Nationality" b="is (All)" h="h-[54px]" />
          </div>
        </div>
        <div className="mt-[4px] h-[320px] w-[7px] rounded-full bg-[#a6a6a6]" />
      </div>
    </section>
  );
}

const Calc = () => (
  <Svg w={17} h={19}><rect x="1.500" y="1" width="13" height="16" rx="2.500" stroke="#e0e0e0" strokeWidth="1.400" /><rect x="4.500" y="3.500" width="7" height="3" rx="1" stroke="#e0e0e0" /><path d="M4.500 9.500H12M4.500 12H12M4.500 14.500H12" stroke="#e0e0e0" strokeWidth="1.500" strokeDasharray="1.700 1.100" /></Svg>
);
const CalcGroup = () => (
  <Svg w={17} h={20}><rect x="1" y="1" width="12" height="16" rx="2.500" stroke="#e0e0e0" strokeWidth="1.300" /><path d="M15 3Q16.500 4 16.300 6V15Q16 19 11 19H5" stroke="#e0e0e0" strokeWidth="1.200" /><rect x="3.800" y="3.500" width="6.500" height="3" rx="1" stroke="#e0e0e0" /><path d="M4 9.500H11M4 12H11M4 14.500H11" stroke="#e0e0e0" strokeWidth="1.500" strokeDasharray="1.700 1.100" /></Svg>
);
const TableIc = () => (
  <Svg w={17} h={18}><rect x="1" y="1.500" width="14" height="15" rx="3" stroke="#e0e0e0" strokeWidth="1.300" /><path d="M1 6H15M1 12H15M5.500 1.500V16.500M10.500 1.500V16.500" stroke="#e0e0e0" strokeWidth="1.200" /></Svg>
);
const PeriodIc = () => (
  <Svg w={18} h={18}><path d="M4 1H3Q1 1 1 3V15Q1 17 3 17H4M14 1H15Q17 1 17 3V15Q17 17 15 17H14" stroke="#e0e0e0" strokeWidth="1.400" /><rect x="4.500" y="4" width="7" height="8" rx="1" fill="#e0e0e0" /><path d="M13 6Q14 14 7 14" stroke="#e0e0e0" strokeWidth="1.300" /><path d="M5 8.500H11M8 7V12" stroke="#141414" strokeWidth=".8" /></Svg>
);
const FieldIc = () => (
  <Svg w={19} h={19}><path d="M5 16Q1 16 1 13V4Q1 1 4 1H13Q15 1 15 4V7M1 5H15M5.500 1V16M10.500 1V8" stroke="#e0e0e0" strokeWidth="1.300" /><path d="M12 10Q10 10 10 12V16Q10 18 12 18M15 10Q17.500 10 17.500 12V16Q17.500 18 15 18" stroke="#e0e0e0" strokeWidth="1.300" /></Svg>
);

const tree: { k: "g" | "c"; t: string; icon?: React.ReactNode }[] = [
  { k: "g", t: "DAX Measures", icon: <CalcGroup /> },
  ...["Bank Deposit", "Bank Loan", "Business Lend...", "Checking Acc...", "Credit Cards B...", "Engagment Le...", "Foreign Curre...", "Savings Accou...", "Total CC Amo...", "Total Clients", "Total Deposit", "Total Fees", "Total Loan"].map((t) => ({ k: "c" as const, t, icon: <Calc /> })),
  { k: "g", t: "Period", icon: <PeriodIc /> },
  { k: "c", t: "Name", icon: <FieldIc /> },
  { k: "g", t: "Banking Relationship", icon: <TableIc /> },
  { k: "c", t: "Banking Relati..." },
  { k: "c", t: "BRId" },
  { k: "g", t: "Clients - Banking", icon: <TableIc /> },
  { k: "c", t: "Age" },
  { k: "c", t: "Amount of Cr..." },
  { k: "c", t: "" },
];

function DataPane() {
  return (
    <section className="flex w-[225px] shrink-0 flex-col bg-[#141414] text-[#f3f3f3]">
      <div className="flex h-[57px] items-center pr-[12px] pb-[8px] pl-[10px]">
        <h2 className="text-[18.700px] font-semibold tracking-[-0.25px] text-white">Data</h2>
        <span className="ml-auto"><Dbl /></span>
      </div>
      <div className="ml-[5px] flex h-[30px] w-[215px] shrink-0 items-center rounded-[4px] border border-[#666] bg-[#222] pt-px pl-[15px] text-[16.300px] tracking-[-0.2px] text-[#9c9c9c]">
        <Svg w={18} h={18} className="mr-[9px] mb-[2px]"><circle cx="7.500" cy="7.500" r="6" stroke="#b0b0b0" strokeWidth="1.300" /><path d="M12 12L17 17" stroke="#b0b0b0" strokeWidth="1.300" /></Svg>
        Search
      </div>
      <div className="mt-[10px] flex h-[670px] shrink-0">
        <div className="h-[670px] w-[210px] shrink-0 overflow-hidden pt-[1px] text-[14.700px] whitespace-nowrap tracking-[-0.27px]">
          {tree.map((n, i) =>
            n.k === "g" ? (
              <div key={i} className="flex h-[30px] items-center pl-[18px]">
                <Chev s={11} sw={1.300} c="#e0e0e0" />
                <span className="ml-[6px] flex w-[23px] justify-center pr-[4px]">{n.icon}</span>
                <span className="pt-px">{n.t}</span>
              </div>
            ) : (
              <div key={i} className="flex h-[30px] items-center pl-[55px]">
                <i className="h-[15px] w-[15px] rounded-[2px] border border-[#b0b0b0]" />
                <span className="ml-[10px] flex w-[22px]">{n.icon}</span>
                <span className="pt-px">{n.t}</span>
              </div>
            ),
          )}
        </div>
        <div className="h-[288px] w-[10px] bg-[#8a8a8a]" />
      </div>
    </section>
  );
}

function StatusBar() {
  return (
    <div className="flex h-[31px] shrink-0 items-center border-y border-t-[#5c5c5c] border-b-[#4a4a4a] bg-[#141414] text-[#d6d6d6]">
      <span className="ml-[5px] pt-[1px] text-[14px] tracking-[-0.08px]">Page 5 of 5</span>
      <i className="ml-auto h-[2px] w-[6px] bg-[#d6d6d6]" />
      <div className="ml-[6px] flex h-[14px] w-[125px] items-center">
        <i className="h-px w-[47px] bg-[#d6d6d6]" /><i className="h-[13px] w-[5px] bg-[#d6d6d6]" /><i className="h-px w-[10px] bg-[#d6d6d6]" /><i className="h-[8px] w-px bg-[#d6d6d6]" /><i className="h-px w-[62px] bg-[#d6d6d6]" />
      </div>
      <Svg w={10} h={10} className="ml-[6px]"><path d="M5 0V10M0 5H10" stroke="#d6d6d6" strokeWidth="1.500" /></Svg>
      <span className="ml-[17px] w-[53px] text-[14.200px]">81%</span>
      <Svg w={18} h={14} className="mt-px mr-[24px]"><rect x="1" y="1" width="16" height="12" rx="2" stroke="#d6d6d6" strokeWidth="1.400" /><path d="M4 6V4H6M12 4H14V6M14 8V10H12M6 10H4V8" stroke="#d6d6d6" strokeWidth="1.100" /></Svg>
    </div>
  );
}

const TI = ({ children, ml }: { children: React.ReactNode; ml: string }) => <Svg w={32} h={22} className={ml}>{children}</Svg>;

function Taskbar() {
  return (
    <footer className="flex h-[32px] items-end overflow-hidden bg-[linear-gradient(90deg,#222,#242424_24%,#2d262b_34%,#281f2a_46%,#2e2224_60%,#252424_72%,#262626)] text-[#f3f3f3]">
      <Svg w={34} h={32} className="ml-[34px]"><path d="M2 32Q5 22 14 18L18 32Z" fill="#f5a92c" /><circle cx="14" cy="17.500" r="10.500" fill="#f28c96" /><text x="7" y="22.500" fontSize="12.500" fill="#111" fontFamily="Open Sans" textLength="15">9+</text></Svg>
      <span className="-ml-[4px] w-[407px] text-[14px] leading-[27px] tracking-[-0.4px]">31°C</span>
      <Svg w={32} h={22} className="ml-[31px]"><path d="M1 5H14V22H1ZM16 5H29V22H16Z" fill="#3cb8f5" /></Svg>
      <div className="ml-[14px] flex h-[23px] w-[274px] rounded-t-[22px] border-x border-t border-[#5d555b] bg-[#453d44] pl-[14px]">
        <Svg w={18} h={22}><circle cx="8" cy="19" r="7.500" stroke="#f3f3f3" strokeWidth="2" /></Svg>
        <span className="ml-[12px] text-[15.200px] leading-[38px] text-[#d0ccd0]">Search</span>
        <Svg w={56} h={23} className="ml-[114px]"><path d="M7 21V9L12 7.500V19M46 17V4L50 3" stroke="#f0a060" strokeWidth="1.600" /><circle cx="5" cy="20" r="2.500" fill="#f0a060" /><circle cx="44" cy="15" r="2.500" fill="#f0a060" /><path d="M20 7L24 10L27 3L31 10L34 6Q35 17 27 18Q19 17 20 7Z" fill="#e23b4e" /><path d="M27 18V23M18 17L24 22M35 17L30 22" stroke="#3fa64a" strokeWidth="2.500" /><path d="M36 19L42 23L50 14V23H38Z" fill="#5b7fd0" /></Svg>
      </div>
      <TI ml="ml-[17px]"><rect x="8" y="5" width="22" height="17" fill="#f0f0f0" /><rect x="0" y="12" width="22" height="10" fill="#8d8d8d" fillOpacity=".85" /></TI>
      <div className="ml-[22px] h-[25px] w-[32px] overflow-hidden pt-[3px]"><CopilotLogo size={31} id="tb" /></div>
      <TI ml="ml-[24px]"><circle cx="16" cy="6" r="5" fill="#7b83eb" /><circle cx="25" cy="8" r="3.500" fill="#5059c9" /><path d="M8 12H30V22H8Z" fill="#7b83eb" /><rect x="1" y="10" width="17" height="12" fill="#4b53bc" /><path d="M5 14H14M9.500 14V22" stroke="#fff" strokeWidth="2" /></TI>
      <TI ml="ml-[22px]"><circle cx="16" cy="19" r="15" fill="#1b8fd6" /><path d="M4 12Q14 0 26 8Q32 14 30 22H20Q20 14 12 14Q5 15 4 12Z" fill="#3cc7a0" /><circle cx="17" cy="20" r="5" fill="#0d4f8f" /></TI>
      <TI ml="ml-[23px]"><path d="M1 5H12L15 8H31V22H1Z" fill="#e0a020" /><rect x="1" y="10" width="30" height="12" fill="#fcd05c" /></TI>
      <TI ml="ml-[23px]"><circle cx="16" cy="19" r="15" fill="#e53a2e" /><path d="M1 16L16 19L9 34Z" fill="#2da94f" /><path d="M16 12H31V34L20 26Z" fill="#fdc719" /><circle cx="16" cy="19" r="7.500" fill="#fff" /><circle cx="16" cy="19" r="6" fill="#3b7de9" /></TI>
      <TI ml="ml-[23px]"><rect x="2" y="8" width="29" height="20" rx="4" fill="#f5161c" /><path d="M13 14L22 20L13 26Z" fill="#fff" /></TI>
      <TI ml="ml-[23px]"><path d="M7 28A12 12 0 1 1 27 26" stroke="#1f8f2a" strokeWidth="3.500" transform="translate(0,-1)" /><path d="M5 21A12 12 0 0 1 16 8" stroke="#58d838" strokeWidth="2" strokeDasharray="2 2" /></TI>
      <TI ml="ml-[23px]"><path d="M4 9L7 7L11 4H22L26 7L29 9L27 13V22H6V13Z" fill="#f54d27" /><path d="M10 10L16 12L23 10L25 14L21 18L22 22H11L12 18L8 14Z" fill="#fff" /><path d="M13 14H20L16.500 20Z" fill="#f54d27" /></TI>
      <TI ml="ml-[23px]"><path d="M22 4L30 8V22H23V12L10 22H2Z" fill="#2196e3" /><path d="M2 16L5 13L14 20" stroke="#1277bd" strokeWidth="3" /></TI>
      <div className="ml-[13px] flex h-[28px] w-[49px] items-end justify-center rounded-t-[6px] border-x border-t border-[#454545] bg-[#383838]">
        <Svg w={28} h={22}><rect x="14" y="2" width="11" height="20" fill="#e6a512" /><path d="M8 10H20V22H8Z" fill="#f2c437" /><rect x="3" y="17" width="11" height="5" fill="#fbe07c" /></Svg>
      </div>
      <Svg w={16} h={14} className="ml-[87px]"><path d="M2 13L8 7L14 13" stroke="#f3f3f3" strokeWidth="1.800" /></Svg>
      <Svg w={26} h={16} className="ml-[22px]"><path d="M2 16Q3 8 9 7Q12 2 19 5Q21 8 20 16Z" fill="#a9a9a9" /><circle cx="17" cy="14" r="6" fill="#d23b46" /><path d="M14.500 11.500L19.500 16.500M19.500 11.500L14.500 16.500" stroke="#fff" strokeWidth="1.500" /></Svg>
      <Svg w={22} h={14} className="ml-[15px]"><rect x="1" y="3" width="18" height="16" rx="2" stroke="#f3f3f3" strokeWidth="1.500" /><path d="M4 7H17M4 10H17M4 13H17" stroke="#f3f3f3" strokeWidth="1.600" strokeDasharray="1.700 2" /></Svg>
      <span className="ml-[22px] text-[13.600px] leading-[26px] tracking-[-0.2px]">ENG</span>
      <Svg w={22} h={16} className="ml-[21px]"><path d="M1 8Q11 -1 21 8M4 11Q11 5 18 11M7 14.500Q11 11 15 14.500" stroke="#f3f3f3" strokeWidth="1.700" /></Svg>
      <Svg w={22} h={16} className="ml-[8px]"><path d="M1 16V8H4L9 4V16M12 8Q14 11 12 16M15 5Q18 10 16 16" stroke="#f3f3f3" strokeWidth="1.500" /><path d="M18 3Q22 9 20 16" stroke="#888" strokeWidth="1.500" /></Svg>
      <Svg w={22} h={14} className="ml-[10px]"><rect x="1" y="2" width="17" height="14" rx="2" stroke="#f3f3f3" strokeWidth="1.700" /><rect x="3" y="5" width="7" height="10" fill="#f3f3f3" /><path d="M20 7V12" stroke="#f3f3f3" strokeWidth="2" /></Svg>
      <span className="ml-[58px] text-[14px] leading-[27px] tracking-[-0.25px]">23:26</span>
      <Svg w={18} h={20} className="ml-[13px]"><path d="M2 20Q1 8 10 8L14 12V20Z" fill="#f3f3f3" /><text x="9" y="11" fontSize="10" fontWeight="700" fill="#f3f3f3" fontFamily="Open Sans">z</text><text x="4" y="18" fontSize="8" fontWeight="700" fill="#222" fontFamily="Open Sans">z</text></Svg>
    </footer>
  );
}

export default function App() {
  return (
    <div className="flex h-[1026px] w-[1920px] flex-col overflow-hidden bg-[#141414] font-['Open_Sans',sans-serif]">
      <Header />
      <Ribbon />
      <main className="flex h-[777px] shrink-0">
        <SideNav />
        <div className="flex w-[1418px] shrink-0 flex-col">
          <div className="flex h-[733px]">
            <div className="flex h-[733px] w-[1376px] shrink-0 overflow-hidden bg-white pl-[36px]"><Report /></div>
            <FiltersRail />
          </div>
          <PageTabs />
        </div>
        <Visualizations />
        <DataPane />
      </main>
      <StatusBar />
      <Taskbar />
    </div>
  );
}
